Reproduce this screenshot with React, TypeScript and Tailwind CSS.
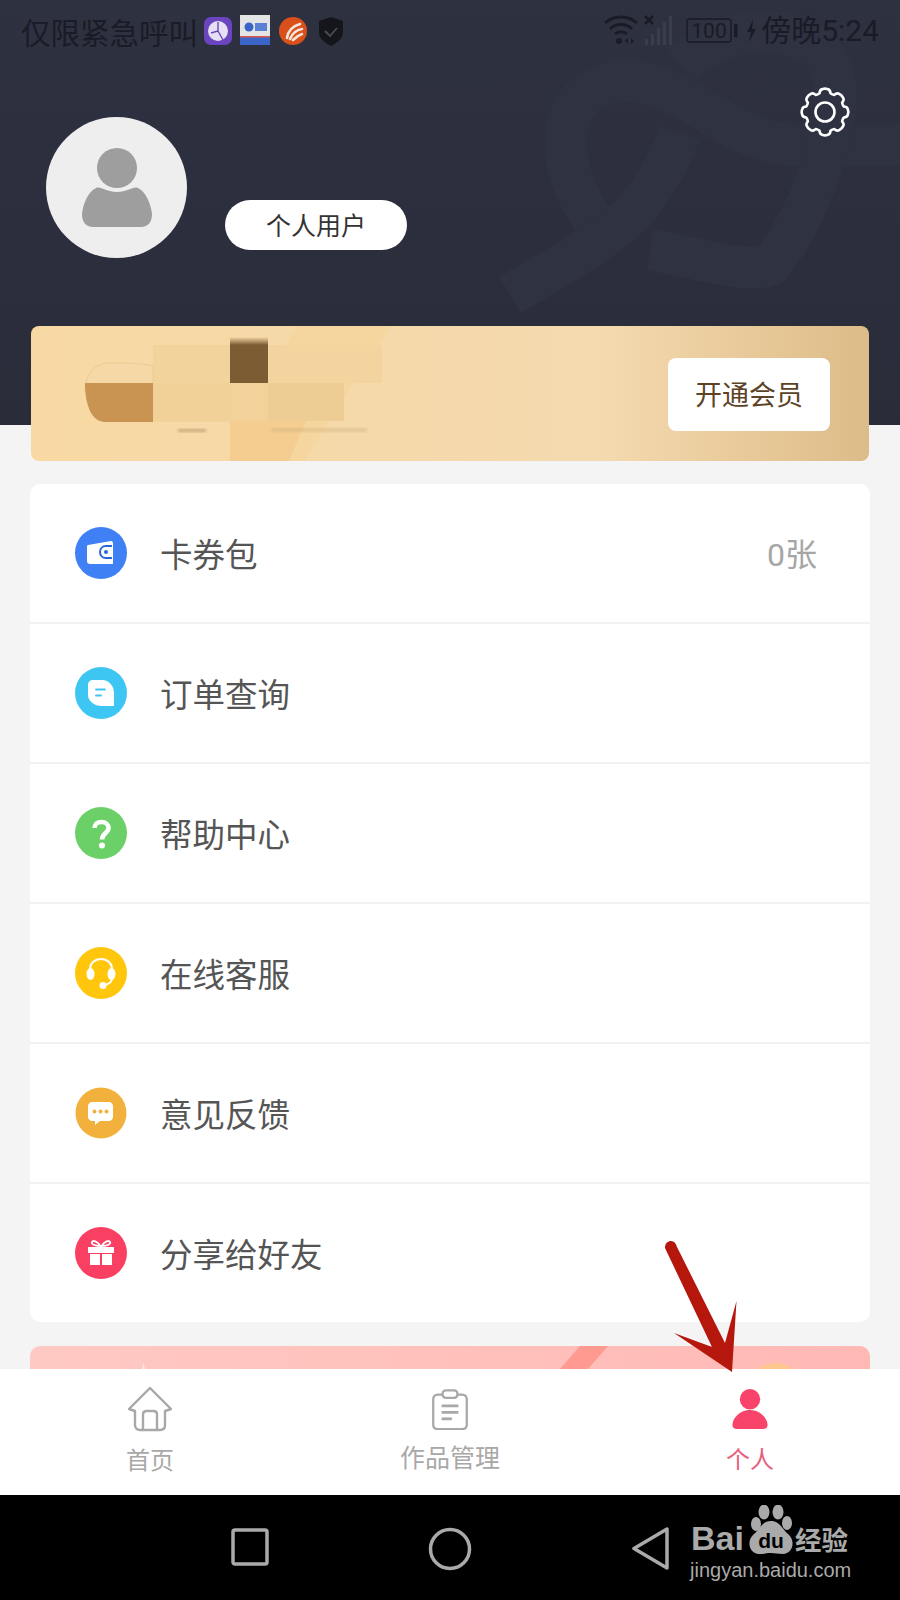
const cjk = { fontFamily: '"Noto Sans CJK SC", "Noto Sans", sans-serif' };

function gearPath(cx: number, cy: number, outer: number, inner: number, teeth: number) {
  const parts: string[] = [];
  const step = (Math.PI * 2) / teeth;
  const pt = (r: number, a: number) => `${(cx + r * Math.cos(a)).toFixed(2)} ${(cy + r * Math.sin(a)).toFixed(2)}`;
  for (let i = 0; i < teeth; i++) {
    const a = i * step - Math.PI / 2;
    const cmd = i === 0 ? "M" : "L";
    parts.push(`${cmd}${pt(inner, a - step * 0.36)}`);
    parts.push(`Q${pt(outer, a - step * 0.3)} ${pt(outer, a - step * 0.14)}`);
    parts.push(`Q${pt(outer + 0.8, a)} ${pt(outer, a + step * 0.14)}`);
    parts.push(`Q${pt(outer, a + step * 0.3)} ${pt(inner, a + step * 0.36)}`);
    parts.push(`Q${pt(inner - 0.6, a + step * 0.5)} ${pt(inner, a + step * 0.64)}`);
  }
  return parts.join(" ") + "Z";
}

function Gear() {
  return (
    <svg width="50" height="50" viewBox="0 0 50 50" fill="none" stroke="#ffffff" strokeWidth="2.6" strokeLinejoin="round" className="shrink-0">
      <path d={gearPath(25, 25, 23, 19.5, 8)} />
      <circle cx="25" cy="25" r="9.5" />
    </svg>
  );
}

function StatusLeft() {
  return (
    <div className="flex items-center">
      <span className="text-[29.5px] leading-[40px] text-[#191b26] w-[184px] whitespace-nowrap">仅限紧急呼叫</span>
      <svg width="150" height="36" viewBox="0 0 150 36" className="-ml-[1px]">
        <rect x="0" y="4" width="28" height="28" rx="7" fill="#6b45c0" />
        <circle cx="14" cy="18" r="10" fill="#e6e0f2" />
        <path d="M14 9v9l-7 2M14 18l5 9" stroke="#6b45c0" strokeWidth="1.4" fill="none" />
        <rect x="36" y="2" width="30" height="30" fill="#e4e4e6" />
        <rect x="36" y="24" width="30" height="8" fill="#3b64c9" />
        <rect x="36" y="23" width="30" height="1.5" fill="#d8584c" />
        <circle cx="45" cy="14" r="4.5" fill="#3b64c9" />
        <rect x="51" y="10" width="12" height="8" fill="#5c7fd6" />
        <ellipse cx="89" cy="18" rx="14" ry="14" fill="#d9501a" />
        <path d="M83 25C84 18 89 13 96 11M86 26C88 21 92 17 98 16M89 27C92 24 95 22 98 21" stroke="#f4e5d8" strokeWidth="2.6" fill="none" strokeLinecap="round" />
        <path d="M127 4l12 4v11c0 7-6 11-12 14-6-3-12-7-12-14V8z" fill="#15161c" />
        <path d="M121 18l5 5 7-8" stroke="#4a4c55" strokeWidth="1.8" fill="none" />
      </svg>
    </div>
  );
}

function StatusRight() {
  return (
    <div className="flex items-center">
      <svg width="158" height="36" viewBox="0 0 158 36">
        <g stroke="#191b26" fill="none" strokeWidth="2.8">
          <path d="M2 10C11 2 25 2 34 10" />
          <path d="M7 16C13 10 23 10 29 16" />
          <path d="M12 21C15 18 21 18 24 21" />
        </g>
        <circle cx="16" cy="28" r="3" fill="#191b26" />
        <path d="M25 25l-3 3 3 3zM28 25l3 3-3 3z" fill="#191b26" />
        <path d="M42 3l8 8M50 3l-8 8" stroke="#191b26" strokeWidth="2.6" />
        <g fill="#3a3d4a">
          <rect x="42" y="26" width="3" height="6" />
          <rect x="48" y="21" width="3" height="11" />
          <rect x="54" y="15" width="3" height="17" />
          <rect x="60" y="9" width="3" height="23" />
          <rect x="66" y="3" width="3" height="29" />
        </g>
        <rect x="84" y="6" width="44" height="23" rx="3" fill="none" stroke="#191b26" strokeWidth="1.4" />
        <text x="106" y="25" textAnchor="middle" fontSize="21" fill="#191b26" fontFamily="Roboto, sans-serif">100</text>
        <rect x="131" y="11" width="3.5" height="13" fill="#191b26" />
        <path d="M150 7l-6 12h4l-2 10 7-13h-4z" fill="#191b26" />
      </svg>
      <span className="text-[30px] leading-[40px] text-[#191b26] whitespace-nowrap" style={{ fontFamily: 'Roboto, "Noto Sans CJK SC", sans-serif' }}>傍晚5:24</span>
    </div>
  );
}

function Avatar() {
  return (
    <div className="w-[141px] h-[141px] rounded-full bg-[#eeeeee] flex items-center justify-center shrink-0">
      <svg width="72" height="80" viewBox="0 0 72 80">
        <ellipse cx="36" cy="20" rx="20" ry="20" fill="#9e9e9e" />
        <path d="M15 40C20 38 25 44 36 44S52 38 57 40C65 44 70 56 71 66 71 74 67 79 60 79H12C5 79 1 74 1 66 2 56 7 44 15 40Z" fill="#9e9e9e" />
      </svg>
    </div>
  );
}

function VipCard() {
  return (
    <div className="relative mx-[31px] -mt-[99px] h-[135px] w-[838px] rounded-[8px] overflow-hidden bg-[linear-gradient(90deg,#f8d9a3_0%,#f5d9ab_45%,#f5dab0_68%,#e6c796_88%,#dcbc88_100%)] flex items-center justify-end pr-[39px]">
      <svg className="absolute left-0 top-0" width="838" height="135" viewBox="0 0 838 135">
        <defs>
          <linearGradient id="brownFade" x1="0" y1="0" x2="0" y2="1">
            <stop offset="0" stopColor="#7c5c33" stopOpacity="0" />
            <stop offset="1" stopColor="#7c5c33" />
          </linearGradient>
          <filter id="bl"><feGaussianBlur stdDeviation="1.5" /></filter>
        </defs>
        <path d="M265 0H360L273 135H199Z" fill="#f6d69f" />
        <rect x="122" y="19" width="77" height="77" fill="#f2d39c" />
        <path d="M54 66C54 48 64 37 78 37 95 37 110 37 122 40V66Z" fill="#f5d8a6" stroke="#ecca92" strokeWidth="1" />
        <path d="M54 57H122V96H74C62 96 54 82 54 57Z" fill="#c99351" />
        <rect x="199" y="11" width="38" height="8" fill="url(#brownFade)" />
        <rect x="199" y="19" width="38" height="38" fill="#7c5c33" />
        <rect x="237" y="19" width="114" height="38" fill="#f3d49e" />
        <rect x="237" y="57" width="76" height="38" fill="#eecd94" />
        <rect x="122" y="57" width="77" height="38" fill="#f1d197" />
        <rect x="199" y="57" width="38" height="38" fill="#f2d29a" />
        <path d="M199 95H275L258 135H199Z" fill="#f5cd90" />
        <rect x="147" y="103" width="28" height="3" fill="#a98a5e" opacity="0.6" filter="url(#bl)" />
        <rect x="240" y="102" width="96" height="4" fill="#c8ab7c" opacity="0.4" filter="url(#bl)" />
      </svg>
      <div className="relative w-[162px] h-[73px] rounded-[8px] bg-white flex items-center justify-center text-[27px] text-[#5c4326] mt-[1px]">开通会员</div>
    </div>
  );
}

function WalletIcon() {
  return (
    <svg width="52" height="52" viewBox="0 0 52 52">
      <circle cx="26" cy="26" r="26" fill="#3f80f5" />
      <path d="M13 18L36 14C37 14 38 15 38 16V37H15C13 37 12 36 12 34V20C12 19 12 18 13 18Z" fill="#fff" />
      <path d="M37 19H31C27 19 25 22 25 25S27 31 31 31H37" fill="none" stroke="#2b66d6" strokeWidth="2" />
      <circle cx="31" cy="25" r="2" fill="#2b66d6" />
    </svg>
  );
}

function DocIcon() {
  return (
    <svg width="52" height="52" viewBox="0 0 52 52">
      <circle cx="26" cy="26" r="26" fill="#3ec6f2" />
      <path d="M18 13H27C34 13 39 19 39 26V39H27C19 39 13 34 13 28V18C13 15 15 13 18 13Z" fill="#fff" />
      <path d="M21 22.500H30M21 28.500H26" stroke="#3ec6f2" strokeWidth="1.8" strokeLinecap="round" />
    </svg>
  );
}

function HelpIcon() {
  return (
    <svg width="52" height="52" viewBox="0 0 52 52">
      <circle cx="26" cy="26" r="26" fill="#6bd068" />
      <path d="M19.500 21C19.500 17 22.500 15 26.500 15 30.500 15 33.500 17.500 33.500 21 33.500 26 27 26 27 32.500" fill="none" stroke="#fff" strokeWidth="4.6" />
      <circle cx="27" cy="38.500" r="3" fill="#fff" />
    </svg>
  );
}

function ServiceIcon() {
  return (
    <svg width="52" height="52" viewBox="0 0 52 52">
      <circle cx="26" cy="26" r="26" fill="#ffc60b" />
      <path d="M15 25V22C15 16 20 12 26 12S37 16 37 22V25" fill="none" stroke="#fff" strokeWidth="2" />
      <ellipse cx="15.500" cy="27" rx="4" ry="6" fill="#fff" />
      <ellipse cx="36.500" cy="27" rx="4" ry="6" fill="#fff" />
      <path d="M37 32C36 36 33 37.500 29 38" fill="none" stroke="#fff" strokeWidth="2" />
      <circle cx="28" cy="38.500" r="3.500" fill="#fff" />
    </svg>
  );
}

function ChatIcon() {
  return (
    <svg width="52" height="52" viewBox="0 0 52 52">
      <circle cx="26" cy="26" r="25.500" fill="#f2b13c" />
      <path d="M17 15H34C36 15 38 17 38 19V30C38 32 36 34 34 34H25L20 38V34H17C15 34 13 32 13 30V19C13 17 15 15 17 15Z" fill="#fff" />
      <circle cx="19.500" cy="24.500" r="2" fill="#f2b13c" />
      <circle cx="25.500" cy="24.500" r="2" fill="#f2b13c" />
      <circle cx="31.500" cy="24.500" r="2" fill="#f2b13c" />
    </svg>
  );
}

function GiftIcon() {
  return (
    <svg width="52" height="52" viewBox="0 0 52 52">
      <circle cx="26" cy="26" r="26" fill="#f93f62" />
      <rect x="13" y="20" width="26" height="6" fill="#fff" />
      <rect x="15" y="27" width="10" height="11" fill="#fff" />
      <rect x="27" y="27" width="10" height="11" fill="#fff" />
      <path d="M25.500 19C22 14 18 13 17 15S19 19 25.500 19ZM26.500 19C30 14 34 13 35 15S33 19 26.500 19Z" fill="none" stroke="#fff" strokeWidth="1.800" />
    </svg>
  );
}

const rows = [
  { label: "卡券包", Icon: WalletIcon, right: "0张" },
  { label: "订单查询", Icon: DocIcon },
  { label: "帮助中心", Icon: HelpIcon },
  { label: "在线客服", Icon: ServiceIcon },
  { label: "意见反馈", Icon: ChatIcon },
  { label: "分享给好友", Icon: GiftIcon },
];

function MenuList() {
  return (
    <div className="mx-[30px] mt-[23px] bg-white rounded-[10px]">
      {rows.map((r, i) => (
        <div key={r.label} className={`flex items-center pl-[45px] pr-[53px] ${i < 5 ? "h-[140px] border-b-2 border-[#f1f1f1]" : "h-[138px]"}`}>
          <r.Icon />
          <span className="ml-[33px] text-[32.5px] text-[#555555] flex-1">{r.label}</span>
          {r.right ? (
            <span className="mt-[4px] text-[32px] text-[#a6a6a6]" style={{ fontFamily: 'Roboto, "Noto Sans CJK SC", sans-serif' }}>{r.right}</span>
          ) : null}
        </div>
      ))}
    </div>
  );
}

function PromoCard() {
  return (
    <div className="relative mx-[30px] mt-[24px] h-[60px] rounded-t-[10px] overflow-hidden bg-[linear-gradient(90deg,#ffc9c3,#ffbfba_60%,#ffb9b5)]">
      <svg className="absolute left-0 top-0" width="840" height="60" viewBox="0 0 840 60">
        <path d="M550 0H578L558 23H530Z" fill="#ff9a90" />
        <path d="M112 23l1.500-6 1.500 6z" fill="#ffe6e3" />
        <circle cx="745" cy="47" r="30" fill="#fdc78f" />
      </svg>
    </div>
  );
}

function NavBar() {
  return (
    <div className="h-[126px] bg-white grid grid-cols-3 shrink-0 relative">
      <div className="flex flex-col items-center pt-[17px]">
        <svg width="46" height="46" viewBox="0 0 46 46" fill="none" stroke="#a8a8a8" strokeWidth="2.4">
          <path d="M23 2L44 23 38 25V39C38 42 36 44 33 44H13C10 44 8 42 8 39V25L2 23Z" strokeLinejoin="round" />
          <path d="M16 44V28C16 26 18 25 20 25H26C28 25 30 26 30 28V44" />
        </svg>
        <span className="text-[24px] leading-[32px] mt-[11px] text-[#a8a8a8]">首页</span>
      </div>
      <div className="flex flex-col items-center pt-[20px]">
        <svg width="36" height="41" viewBox="0 0 38 44" fill="none" stroke="#a8a8a8" strokeWidth="2.4">
          <path d="M11 6H6C3 6 1 8 1 11V38C1 41 3 43 6 43H32C35 43 37 41 37 38V11C37 8 35 6 32 6H27" />
          <rect x="11" y="1.500" width="16" height="8" rx="3.500" />
          <path d="M10 18H28M10 25H28" strokeWidth="3" />
          <path d="M10 32H21" strokeWidth="3" />
        </svg>
        <span className="text-[25px] leading-[32px] mt-[10px] text-[#a8a8a8]">作品管理</span>
      </div>
      <div className="flex flex-col items-center pt-[20px]">
        <svg width="36" height="40" viewBox="0 0 36 40">
          <circle cx="18" cy="10.200" r="10.200" fill="#f8446a" />
          <path d="M18 21C28 21 35 29 35.500 35 36 38 34 40 31 40H5C2 40 0 38 .5 35 1 29 8 21 18 21Z" fill="#f8446a" />
        </svg>
        <span className="text-[24px] leading-[32px] mt-[13px] text-[#e9607c]">个人</span>
      </div>
    </div>
  );
}

function SystemBar() {
  return (
    <div className="h-[105px] bg-black shrink-0 relative flex items-start pt-[32px] pl-[231px]">
      <svg width="38" height="40" viewBox="0 0 38 40" fill="none" stroke="#aaaaaa" strokeWidth="3.500">
        <rect x="2" y="3" width="34" height="34" rx="2" />
      </svg>
      <svg width="44" height="44" viewBox="0 0 44 44" fill="none" stroke="#aaaaaa" strokeWidth="3.500" className="ml-[159px]">
        <circle cx="22" cy="22" r="19.500" />
      </svg>
      <svg width="40" height="44" viewBox="0 0 40 44" fill="none" stroke="#aaaaaa" strokeWidth="3.500" strokeLinejoin="round" className="ml-[159px]">
        <path d="M36 2V41L3 21.500Z" />
      </svg>
      <div className="absolute left-[690px] top-[10px] w-[170px] h-[85px] text-[#aaaaaa]">
        <span className="absolute left-[1px] top-[13px] text-[34px] leading-[40px] font-bold" style={{ fontFamily: '"Liberation Sans", sans-serif' }}>Bai</span>
        <svg className="absolute left-[57px] top-0" width="48" height="50" viewBox="0 0 48 50" fill="#aaaaaa">
          <ellipse cx="9" cy="19" rx="5" ry="7" />
          <ellipse cx="17" cy="7" rx="5.500" ry="7.500" />
          <ellipse cx="31" cy="7" rx="5.500" ry="7.500" />
          <ellipse cx="40" cy="18" rx="5" ry="7" />
          <path d="M24 16C33 16 35 24 42 30 49 37 45 49 36 49 31 49 28 48 24 48S17 49 12 49C3 49 -1 37 6 30 13 24 15 16 24 16Z" />
          <text x="24" y="43" textAnchor="middle" fontSize="21" fontWeight="700" fill="#000" fontFamily="Liberation Sans, sans-serif">du</text>
        </svg>
        <span className="absolute left-[105px] top-[17px] text-[26.5px] leading-[34px] font-bold whitespace-nowrap">经验</span>
        <span className="absolute left-0 top-[53px] text-[20px] leading-[24px] whitespace-nowrap" style={{ fontFamily: '"Liberation Sans", sans-serif' }}>jingyan.baidu.com</span>
      </div>
    </div>
  );
}

export default function App() {
  return (
    <div className="relative w-[900px] h-[1600px] overflow-hidden bg-[#f4f4f4] flex flex-col" style={cjk}>
      <main className="h-[1369px] shrink-0 overflow-hidden">
        <header className="relative h-[425px] bg-[linear-gradient(180deg,#2e3140,#2a2c3a)] overflow-hidden">
          <svg className="absolute left-0 top-0" width="900" height="425" viewBox="0 0 900 425" fill="none" stroke="#2f3241" strokeWidth="42">
            <path d="M593 220C565 180 555 130 580 100 610 70 650 80 687 100 720 118 745 140 790 145H900" />
            <path d="M510 295C560 265 600 245 630 215 655 190 670 160 680 133" />
            <path d="M680 65C710 40 750 25 790 35 825 45 840 70 835 110 825 170 800 230 770 265 745 275 690 255 650 250" />
          </svg>
          <div className="relative flex items-center justify-between px-[21px] h-[62px]">
            <StatusLeft />
            <StatusRight />
          </div>
          <div className="relative flex items-start pl-[46px] pt-[55px]">
            <Avatar />
            <div className="ml-[38px] mt-[83px] w-[182px] h-[50px] rounded-full bg-white flex items-center justify-center text-[25px] text-[#333333]">个人用户</div>
            <div className="ml-auto mr-[50px] -mt-[30px]">
              <Gear />
            </div>
          </div>
        </header>
        <VipCard />
        <MenuList />
        <PromoCard />
      </main>
      <NavBar />
      <SystemBar />
      <svg className="absolute left-[650px] top-[1230px]" width="100" height="150" viewBox="650 1230 100 150">
        <path d="M665 1248C665 1243 668 1241 671 1241 674 1241 676 1243 677 1247L725 1343 736.500 1301 732 1372 674 1333 712 1347Z" fill="#b5170c" />
      </svg>
    </div>
  );
}
